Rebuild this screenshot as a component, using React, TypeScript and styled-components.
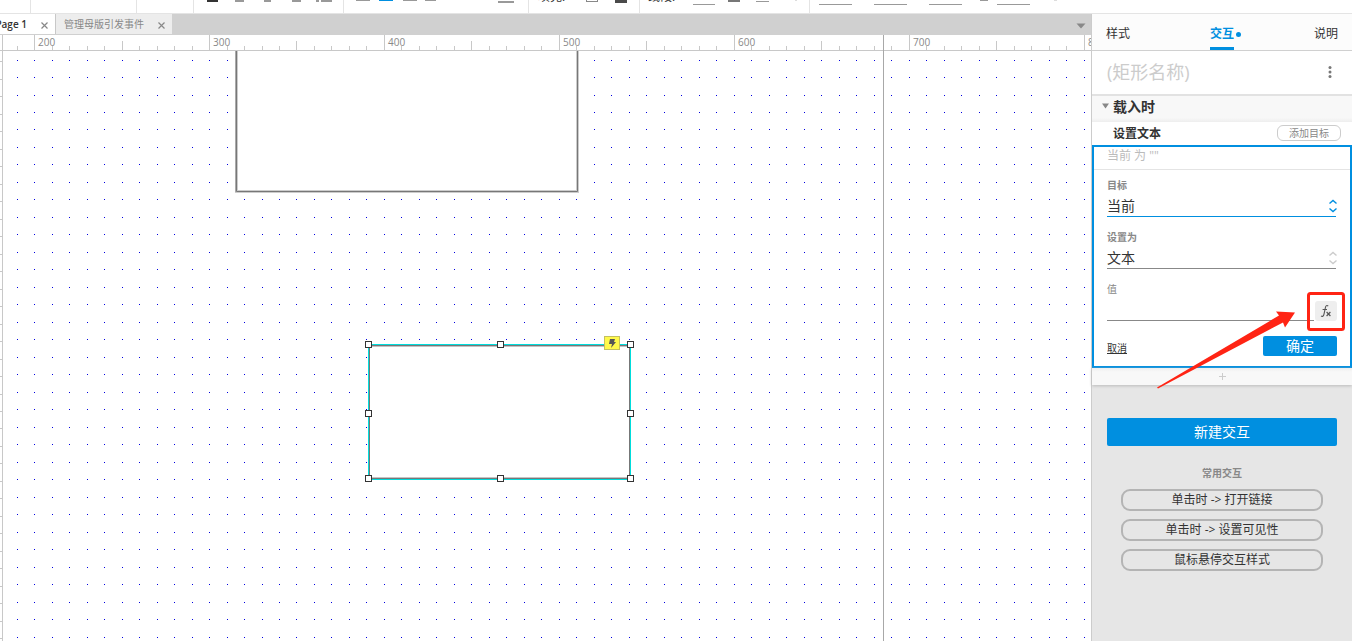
import React from "react";
import styled, { createGlobalStyle } from "styled-components";

const blue = "#008fe0";

const GlobalStyle = createGlobalStyle`
  * { box-sizing: border-box; }
  body {
    margin: 0;
    background: #fff;
    color: #333;
    font-family: "Open Sans", "Noto Sans CJK SC", sans-serif;
    font-size: 12px;
    overflow: hidden;
  }
  button, input, select {
    font: inherit;
    color: inherit;
    margin: 0;
    padding: 0;
    border: 0;
    background: none;
    border-radius: 0;
    outline: none;
  }
`;

const Page = styled.div`
  display: flex;
  flex-direction: column;
  height: 100vh;
`;

/* ---------- toolbar ---------- */

const Toolbar = styled.header`
  display: flex;
  flex: none;
  height: 14px;
  overflow: hidden;
  border-bottom: 1px solid #e4e4e4;
  background: #fff;
`;

const ToolGroup = styled.div<{ $w?: number }>`
  display: flex;
  align-items: flex-start;
  flex: ${(p) => (p.$w ? "none" : "1")};
  width: ${(p) => (p.$w ? p.$w + "px" : "auto")};
  height: 13px;
  border-right: ${(p) => (p.$w ? "1px solid #e4e4e4" : "0")};
`;

const Mark = styled.span<{ $gap: number; $w: number; $h?: number; $top?: number; $c?: string }>`
  flex: none;
  width: ${(p) => p.$w}px;
  height: ${(p) => p.$h ?? 1}px;
  margin-left: ${(p) => p.$gap}px;
  margin-top: ${(p) => p.$top ?? 0}px;
  background: ${(p) => p.$c ?? "#999"};
`;

const Swatch = styled.span`
  flex: none;
  width: 12px;
  height: 2px;
  margin-left: 18px;
  border: 1px solid #888;
  border-top: 0;
`;

const ToolLabel = styled.span<{ $gap: number }>`
  flex: none;
  width: 30px;
  margin-left: ${(p) => p.$gap}px;
  margin-top: -12px;
  line-height: 18px;
  white-space: nowrap;
  color: #333;
`;

/* ---------- workspace ---------- */

const Body = styled.div`
  display: flex;
  flex: 1;
  min-height: 0;
`;

const Workspace = styled.main`
  display: flex;
  flex-direction: column;
  flex: 1;
  min-width: 0;
`;

const TabStrip = styled.div`
  display: flex;
  align-items: stretch;
  flex: none;
  height: 21px;
  background: #d0d0d0;
  border-bottom: 1px solid #d0d0d0;
`;

const PageTab = styled.div<{ $w: number; $active?: boolean }>`
  display: flex;
  align-items: center;
  justify-content: flex-end;
  flex: none;
  gap: 13px;
  width: ${(p) => p.$w}px;
  padding-right: 6px;
  overflow: hidden;
  background: ${(p) => (p.$active ? "#fff" : "#ededed")};
  border-right: ${(p) => (p.$active ? "1px solid #c8c8c8" : "0")};
  color: ${(p) => (p.$active ? "#333" : "#888")};
  font-size: 10px;
  font-weight: ${(p) => (p.$active ? 600 : 400)};
  line-height: 20px;
  white-space: nowrap;
`;

const CloseButton = styled.button`
  display: flex;
  flex: none;
  margin-top: 2px;
`;

const TabMenu = styled.button`
  display: flex;
  align-items: center;
  margin-left: auto;
  padding: 4px 5px 0 0;
`;

const Stage = styled.div`
  position: relative;
  flex: 1;
  min-height: 0;
  overflow: hidden;
  background: #fff;
`;

const StageDrawing = styled.svg`
  display: block;
`;

const RulerText = styled.text`
  font-family: "Open Sans", sans-serif;
  font-size: 10px;
  fill: #888;
`;

/* ---------- inspector ---------- */

const Inspector = styled.aside`
  position: relative;
  display: flex;
  flex-direction: column;
  flex: none;
  width: 261px;
  border-left: 1px solid #ccc;
  background: #e6e6e6;
`;

const InspectorTabs = styled.nav`
  display: flex;
  justify-content: space-between;
  height: 37px;
  padding: 0 14px;
  background: #fcfcfc;
  border-bottom: 1px solid #d0d0d0;
`;

const InspectorTab = styled.button<{ $active?: boolean }>`
  position: relative;
  height: 36px;
  padding-top: 7px;
  line-height: 18px;
  color: ${(p) => (p.$active ? blue : "#333")};
  font-weight: ${(p) => (p.$active ? 700 : 400)};
  border-bottom: 3px solid ${(p) => (p.$active ? blue : "transparent")};
`;

const Dot = styled.span`
  position: absolute;
  left: 26px;
  top: 18px;
  width: 5px;
  height: 5px;
  border-radius: 50%;
  background: ${blue};
`;

const NameRow = styled.div`
  display: flex;
  align-items: center;
  height: 45px;
  padding: 0 20px 2px 15px;
  background: #fff;
  border-bottom: 2px solid #e2e2e2;
`;

const NameInput = styled.input`
  flex: 1;
  min-width: 0;
  height: 30px;
  font-size: 18px;
  &::placeholder { color: #ccc; opacity: 1; }
`;

const KebabButton = styled.button`
  display: flex;
`;

const EventHeader = styled.div`
  display: flex;
  align-items: center;
  gap: 4px;
  height: 26px;
  padding: 0 10px 6px;
  background: linear-gradient(#f8f8f8 22px, #eee);
  font-size: 14px;
  font-weight: 700;
`;

const ActionRow = styled.div`
  display: flex;
  align-items: center;
  justify-content: space-between;
  height: 23px;
  padding: 0 11px 2px 21px;
  background: #fff;
  font-weight: 700;
`;

const AddTarget = styled.button`
  width: 64px;
  height: 16px;
  border: 1px solid #ccc;
  border-radius: 6px;
  color: #888;
  font-size: 10px;
  font-weight: 400;
  line-height: 14px;
`;

const Editor = styled.form`
  display: flex;
  flex-direction: column;
  height: 223px;
  border: 2px solid ${blue};
  background: #fff;
`;

const Summary = styled.div`
  height: 23px;
  padding-left: 13px;
  border-bottom: 1px solid #e4e4e4;
  color: #bbb;
  line-height: 18px;
`;

const Fields = styled.div`
  display: flex;
  flex-direction: column;
  padding: 7px 13px 0;
`;

const Field = styled.div`
  display: flex;
  flex-direction: column;
  height: 52px;
`;

const Label = styled.label<{ $light?: boolean }>`
  height: 18px;
  color: #888;
  font-size: 10px;
  font-weight: ${(p) => (p.$light ? 400 : 700)};
  line-height: 16px;
`;

const SelectBox = styled.div<{ $focus?: boolean }>`
  display: flex;
  align-items: center;
  height: 22px;
  margin-right: 1px;
  border-bottom: 1px solid ${(p) => (p.$focus ? blue : "#888")};
`;

const Select = styled.select`
  flex: 1;
  min-width: 0;
  height: 20px;
  appearance: none;
  font-size: 14px;
  line-height: 20px;
`;

const Stepper = styled.svg`
  flex: none;
  margin: 0 -2px 0 -10px;
  pointer-events: none;
`;

const ValueBox = styled.div`
  display: flex;
  align-items: flex-end;
  gap: 1px;
  height: 22px;
`;

const ValueInput = styled.input`
  flex: 1;
  min-width: 0;
  height: 20px;
  border-bottom: 1px solid #888;
  font-size: 14px;
`;

const FxButton = styled.button`
  display: flex;
  align-items: center;
  justify-content: center;
  width: 22px;
  height: 20px;
  border-radius: 3px;
  background: #eee;
`;

const EditorFooter = styled.div`
  display: flex;
  align-items: flex-end;
  justify-content: space-between;
  margin-top: 3px;
  padding: 0 13px;
`;

const CancelButton = styled.button`
  font-size: 10px;
  text-decoration: underline;
  line-height: 16px;
`;

const PrimaryButton = styled.button<{ $w?: number; $h: number }>`
  width: ${(p) => (p.$w ? p.$w + "px" : "100%")};
  height: ${(p) => p.$h}px;
  border-radius: 2px;
  background: ${blue};
  color: #fff;
  font-size: 14px;
  line-height: ${(p) => p.$h}px;
`;

const AddRow = styled.button`
  display: flex;
  align-items: center;
  justify-content: center;
  height: 17px;
  background: linear-gradient(#eee, #f8f8f8 4px);
  box-shadow: 0 1px 3px #bbb;
`;

const Suggestions = styled.section`
  display: flex;
  flex-direction: column;
  gap: 8px;
  padding: 33px 15px 0;
`;

const SuggestionTitle = styled.h2`
  margin: 12px 0 0;
  color: #888;
  font-size: 10px;
  font-weight: 700;
  line-height: 15px;
  text-align: center;
`;

const Suggestion = styled.button`
  height: 22px;
  margin: 0 14px;
  border: 2px solid #b4b4b4;
  border-radius: 9px;
  line-height: 18px;
`;

const Annotation = styled.svg`
  position: absolute;
  top: 271px;
  right: 0;
  pointer-events: none;
`;

/* ---------- drawings ---------- */

const Cross = () => (
  <svg width="9" height="9" viewBox="0 0 9 9" aria-hidden="true">
    <path d="M1.500 1.500L7.500 7.500M7.500 1.500L1.500 7.500" stroke="#888" strokeWidth="1.2" fill="none" />
  </svg>
);

const Chevrons = ({ color }: { color: string }) => (
  <Stepper width="10" height="16" viewBox="0 0 10 16" aria-hidden="true">
    <path d="M1.500 5.500L5 2.500L8.500 5.500M1.500 10.500L5 13.500L8.500 10.500" stroke={color} strokeWidth="1.4" fill="none" />
  </Stepper>
);

const steps = (from: number, to: number) => Array.from({ length: to - from + 1 }, (_, i) => from + i);
const STEP = 17.49;
const gridX = (k: number) => Math.floor(34.65 + STEP * k);
const gridY = (k: number) => Math.floor(25.03 + STEP * k);

/* Long enough to fill wide windows; the stage clips the rest. */
const COLS = steps(-1, 140);
const ROWS = steps(0, 80);

const dotPath = ROWS.map((r) => COLS.map((c) => `M${gridX(c)} ${gridY(r)}h1v1h-1z`).join("")).join("");
const tickPath = COLS.map((c) => {
  const top = c % 10 === 0 ? 0 : Math.abs(c % 10) === 5 ? 6 : 11;
  return `M${gridX(c)} ${top}h1V15h-1z`;
}).join("");
const sideTickPath = ROWS.map((r) => `M0 ${Math.round(26.2 + STEP * r)}h2v1h-2z`).join("");

const HANDLES: [number, number][] = [
  [368, 309], [500, 309], [630, 309], [368, 378], [630, 378], [368, 443], [500, 443], [630, 443],
];

const Canvas = () => (
  <Stage>
    <StageDrawing width="100%" height="100%" role="img" aria-label="Canvas">
      <path d={dotPath} fill="#0000e0" />
      <path d="M236.500 0V156.500H577.500V0" fill="#fff" stroke="#ccc" strokeWidth="3" />
      <path d="M236.500 0V156.500H577.500V0" fill="none" stroke="#777" />
      <path d="M235.500 0V157" stroke="#aaa" />
      <rect x="369" y="310" width="262" height="134" fill="#fff" />
      <path d="M370 311H630M370 443H630" stroke="#c4c4c4" strokeWidth="2" />
      <rect x="369.5" y="310.5" width="260" height="133" fill="none" stroke="#777" />
      <rect x="368.5" y="309.5" width="262" height="135" fill="none" stroke="#0dd" />
      {HANDLES.map(([x, y]) => (
        <rect key={`${x}-${y}`} x={x - 2.5} y={y - 2.5} width="6" height="6" fill="#fff" stroke="#333" />
      ))}
      <rect x="604.5" y="301.5" width="15" height="13" fill="#fff94a" stroke="#c4c060" />
      <path d="M610 304h5l-1 3h2l-5 6 1-4h-3z" fill="#555" />
      <rect x="0" y="0" width="100%" height="15" fill="#fff" />
      <path d={tickPath} fill="#c8c8c8" />
      {steps(0, 14).map((n) => (
        <RulerText key={n} x={gridX(n * 10) + 4} y="11">{200 + n * 100}</RulerText>
      ))}
      <rect x="0" y="15" width="3" height="100%" fill="#fff" />
      <path d={sideTickPath} fill="#c8c8c8" />
      <rect x="2" y="0" width="1" height="100%" fill="#c8c8c8" />
      <rect x="0" y="15" width="100%" height="1" fill="#c8c8c8" />
      <rect x="883" y="0" width="1" height="100%" fill="#a8a8a8" />
    </StageDrawing>
  </Stage>
);

export default function App() {
  return (
    <Page>
      <GlobalStyle />
      <Toolbar>
        <ToolGroup $w={31} />
        <ToolGroup $w={106} />
        <ToolGroup $w={57} />
        <ToolGroup $w={150}>
          <Mark $gap={13} $w={11} $h={2} $c="#333" />
          <Mark $gap={17} $w={9} $h={2} />
          <Mark $gap={20} $w={7} $h={2} />
          <Mark $gap={21} $w={9} $h={2} />
          <Mark $gap={15} $w={3} $h={2} />
          <Mark $gap={2} $w={11} $h={2} />
        </ToolGroup>
        <ToolGroup $w={185}>
          <Mark $gap={12} $w={14} />
          <Mark $gap={9} $w={14} $c={blue} />
          <Mark $gap={10} $w={14} />
          <Mark $gap={8} $w={11} />
          <Mark $gap={62} $w={16} $h={2} $top={1} />
        </ToolGroup>
        <ToolGroup $w={111}>
          <ToolLabel $gap={9}>填充:</ToolLabel>
          <Swatch />
          <Mark $gap={17} $w={12} $h={3} $c="#4a4a4a" />
        </ToolGroup>
        <ToolGroup $w={170}>
          <ToolLabel $gap={8}>线段:</ToolLabel>
          <Mark $gap={15} $w={22} $top={4} />
          <Mark $gap={13} $w={12} $h={2} $c="#777" />
          <Mark $gap={16} $w={13} $top={1} />
          <Mark $gap={26} $w={2} $c="#ddd" />
        </ToolGroup>
        <ToolGroup>
          <Mark $gap={9} $w={33} $top={4} />
          <Mark $gap={22} $w={33} $top={4} />
          <Mark $gap={22} $w={33} $top={4} />
          <Mark $gap={18} $w={8} />
          <Mark $gap={9} $w={33} $top={4} />
          <Mark $gap={24} $w={3} $c="#ddd" />
        </ToolGroup>
      </Toolbar>
      <Body>
        <Workspace>
          <TabStrip>
            <PageTab $w={56} $active>
              Page 1
              <CloseButton aria-label="Close Page 1"><Cross /></CloseButton>
            </PageTab>
            <PageTab $w={116}>
              管理母版引发事件
              <CloseButton aria-label="Close tab"><Cross /></CloseButton>
            </PageTab>
            <TabMenu aria-label="All tabs">
              <svg width="10" height="6" viewBox="0 0 10 6" aria-hidden="true">
                <path d="M0.5 0.5h9L5 5.5z" fill="#888" />
              </svg>
            </TabMenu>
          </TabStrip>
          <Canvas />
        </Workspace>
        <Inspector>
          <InspectorTabs>
            <InspectorTab>样式</InspectorTab>
            <InspectorTab $active>交互<Dot /></InspectorTab>
            <InspectorTab>说明</InspectorTab>
          </InspectorTabs>
          <NameRow>
            <NameInput placeholder="(矩形名称)" aria-label="矩形名称" />
            <KebabButton aria-label="More">
              <svg width="4" height="14" viewBox="0 0 4 14" fill="#777" aria-hidden="true">
                <circle cx="2" cy="2.5" r="1.5" />
                <circle cx="2" cy="7" r="1.5" />
                <circle cx="2" cy="11.5" r="1.5" />
              </svg>
            </KebabButton>
          </NameRow>
          <EventHeader>
            <svg width="7" height="6" viewBox="0 0 7 6" aria-hidden="true">
              <path d="M0 0.5h7L3.5 5.5z" fill="#888" />
            </svg>
            载入时
          </EventHeader>
          <ActionRow>
            设置文本
            <AddTarget>添加目标</AddTarget>
          </ActionRow>
          <Editor onSubmit={(e) => e.preventDefault()}>
            <Summary>当前 为 ""</Summary>
            <Fields>
              <Field>
                <Label htmlFor="target">目标</Label>
                <SelectBox $focus>
                  <Select id="target"><option>当前</option></Select>
                  <Chevrons color={blue} />
                </SelectBox>
              </Field>
              <Field>
                <Label htmlFor="kind">设置为</Label>
                <SelectBox>
                  <Select id="kind"><option>文本</option></Select>
                  <Chevrons color="#ccc" />
                </SelectBox>
              </Field>
              <Field>
                <Label htmlFor="value" $light>值</Label>
                <ValueBox>
                  <ValueInput id="value" />
                  <FxButton type="button" aria-label="fx">
                    <svg width="12" height="14" viewBox="0 0 12 14" fill="none" stroke="#555" aria-hidden="true">
                      <path d="M8.2 2.2C7 0.8 5.8 1.6 5.4 3.6L4 10.2C3.6 12.2 2.4 12.8 1 12" strokeWidth="1.1" />
                      <path d="M2.6 5.5H7" strokeWidth="1" />
                      <path d="M6.600 8L10.400 12M10.400 8L6.600 12" strokeWidth="1.2" />
                    </svg>
                  </FxButton>
                </ValueBox>
              </Field>
            </Fields>
            <EditorFooter>
              <CancelButton type="button">取消</CancelButton>
              <PrimaryButton type="submit" $w={74} $h={20}>确定</PrimaryButton>
            </EditorFooter>
          </Editor>
          <AddRow aria-label="Add action">
            <svg width="7" height="7" viewBox="0 0 7 7" aria-hidden="true">
              <path d="M3.5 0V7M0 3.5H7" stroke="#ccc" />
            </svg>
          </AddRow>
          <Suggestions>
            <PrimaryButton $h={28}>新建交互</PrimaryButton>
            <SuggestionTitle>常用交互</SuggestionTitle>
            <Suggestion>单击时 -&gt; 打开链接</Suggestion>
            <Suggestion>单击时 -&gt; 设置可见性</Suggestion>
            <Suggestion>鼠标悬停交互样式</Suggestion>
          </Suggestions>
          <Annotation width="202" height="110" viewBox="1150 285 202 110" aria-hidden="true">
            <rect x="1308.5" y="293.5" width="35" height="36" rx="2" fill="none" stroke="#ff2414" strokeWidth="3" />
            <path d="M1157 387.500L1279 315.500L1276 311.500L1295 312.500L1285 327.500L1283 322.500L1158 388.500z" fill="#ff2414" />
          </Annotation>
        </Inspector>
      </Body>
    </Page>
  );
}
